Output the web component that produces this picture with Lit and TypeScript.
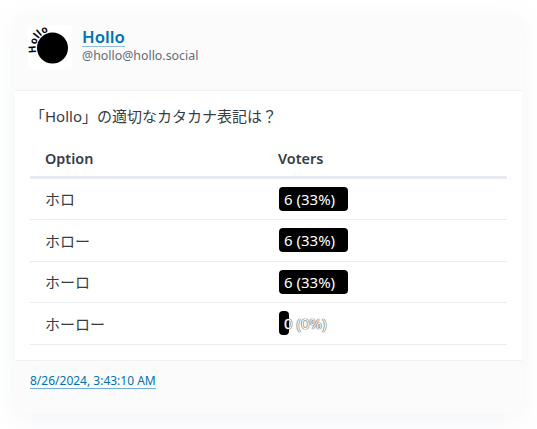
import { LitElement, html, css } from "lit";
import { customElement } from "lit/decorators.js";

const rows = [
  { name: "ホロ", label: "6 (33%)", width: "69px" },
  { name: "ホロー", label: "6 (33%)", width: "69px" },
  { name: "ホーロ", label: "6 (33%)", width: "69px" },
  { name: "ホーロー", label: "0 (0%)", width: "10px", empty: true },
];

@customElement("app-root")
export class AppRoot extends LitElement {
  static styles = css`
    :host {
      display: block;
      width: 537px;
      height: 429px;
      background: #fff;
      overflow: hidden;
      font-family: "Noto Sans", "Noto Sans CJK JP", sans-serif;
      color: #373c44;
      font-size: 15px;
    }
    .page { padding: 15px; box-sizing: border-box; height: 429px; }
    .card {
      height: 399px;
      width: 507px;
      background: #fff;
      border-radius: 6px;
      box-shadow: 0 4px 24px rgba(129, 145, 181, 0.1);
      display: flex;
      flex-direction: column;
      overflow: hidden;
    }
    header {
      height: 76px;
      box-sizing: border-box;
      background: #fbfbfc;
      border-bottom: 1px solid #eff1f4;
      display: flex;
      align-items: flex-start;
      padding: 10px 13px 0;
      gap: 10px;
    }
    .avatar { width: 44px; height: 44px; background: #fff; flex: none; display: block; border-radius: 4px; overflow: visible; }
    .avatar text { font-family: "Noto Sans", sans-serif; font-size: 10px; font-weight: 700; fill: #000; letter-spacing: 0.3px; }
    .who { display: flex; flex-direction: column; }
    .name {
      font-size: 16.75px; font-weight: 600; line-height: 23px; color: #0172ad;
      text-decoration: underline; text-decoration-color: #8fc0da; text-underline-offset: 3px; text-decoration-thickness: 1px;
    }
    .handle { font-size: 12.4px; line-height: 18px; margin-top: -1px; color: #646b79; }
    main { flex: 1; padding: 15px 15px 0; }
    .q { font-size: 15px; line-height: 20px; color: #373c44; margin: 0 0 15px; }
    table { border-collapse: collapse; width: 477px; table-layout: fixed; }
    th {
      font-size: 14.4px; font-weight: 600; text-align: left; height: 36px; padding: 1px 15px 0;
      box-sizing: border-box;
      border-bottom: 3px solid #e7eaf0; color: #373c44;
    }
    th:first-child { width: 233px; }
    td { height: 40.5px; padding: 0 15px; border-bottom: 1px solid #e9ecf0; font-size: 15px; color: #373c44; }
    td.bar-cell { padding-left: 16px; }
    .bar {
      height: 24px; line-height: 24px; background: #000; border-radius: 4px; color: #fff; white-space: nowrap;
      font-size: 15px; padding-left: 5px; box-sizing: border-box;
    }
    .bar.empty { text-shadow: 0 0 1px #555, 0 0 1px #555, 0 0 1px #777; }
    footer {
      height: 54px;
      box-sizing: border-box;
      background: #fbfbfc;
      border-top: 1px solid #eff1f4;
      padding: 8px 15px 0;
    }
    footer a {
      font-size: 12px; line-height: 20px; color: #0172ad;
      text-decoration: underline; text-decoration-color: #6fb0d2; text-underline-offset: 3px; text-decoration-thickness: 1px;
    }
  `;

  render() {
    return html`<div class="page"><div class="card">
      <header>
        <svg class="avatar" viewBox="0 0 44 44" aria-label="Hollo">
          <circle cx="24.5" cy="23" r="15.5" fill="#000"></circle>
          <defs><path id="arc" d="M8.6 28 A 16.6 16.6 0 0 1 30 7.3"></path></defs>
          <text><textPath href="#arc">Hollo</textPath></text>
        </svg>
        <div class="who">
          <a class="name">Hollo</a>
          <span class="handle">@hollo@hollo.social</span>
        </div>
      </header>
      <main>
        <p class="q">「Hollo」の適切なカタカナ表記は？</p>
        <table>
          <thead><tr><th>Option</th><th>Voters</th></tr></thead>
          <tbody>
            ${rows.map(
              (r) => html`<tr>
                <td>${r.name}</td>
                <td class="bar-cell"><div class="bar ${r.empty ? "empty" : ""}" style="width:${r.width}">${r.label}</div></td>
              </tr>`
            )}
          </tbody>
        </table>
      </main>
      <footer><a>8/26/2024, 3:43:10 AM</a></footer>
    </div></div>`;
  }
}
